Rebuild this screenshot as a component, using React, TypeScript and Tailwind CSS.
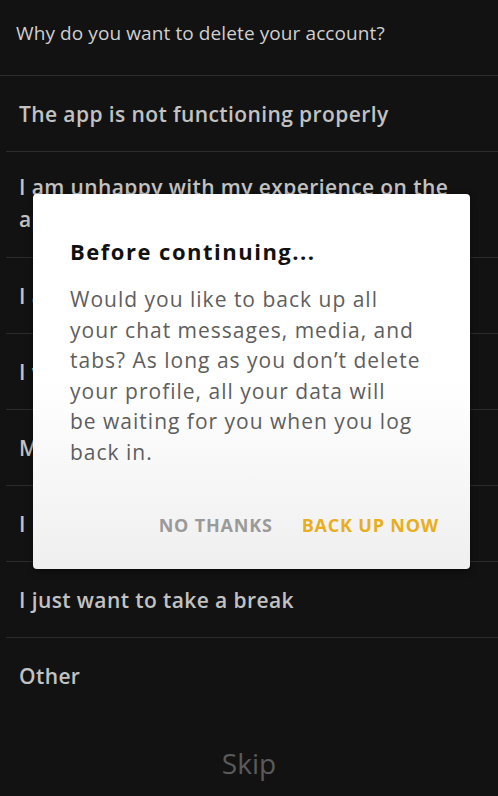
import React from 'react';

// Reasons shown in the delete-account survey list.
const reasons: string[] = [
  'The app is not functioning properly',
  'I am unhappy with my experience on the app',
  'I am not finding who I am looking for',
  'I want to start over with a new profile',
  'My privacy is not protected',
  'I have met someone',
  'I just want to take a break',
  'Other',
];

const font = { fontFamily: '"Open Sans", Roboto, sans-serif' };

const App: React.FC = () => {
  return (
    <div className="relative h-[796px] w-full overflow-hidden bg-[#121212]" style={font}>
      {/* Question header */}
      <div className="flex h-[76px] items-center border-b border-[#2c2c2c] pl-4 pb-2">
        <p className="text-[19px] tracking-[0.1px] text-[#cfcfcf]">Why do you want to delete your account?</p>
      </div>

      {/* Survey rows */}
      <ul className="ml-[6px]">
        {reasons.map((reason, i) => (
          <li
            key={reason}
            className={`flex items-center border-b border-[#2c2c2c] pl-[13px] pr-8 ${
              i === 1 ? 'h-[106px] pb-1' : 'h-[76px]'
            } ${i === reasons.length - 1 ? 'border-b-0' : ''}`}
          >
            <span className="text-[21px] font-semibold leading-[32px] tracking-[0.4px] text-[#c2c2c2]">
              {reason}
            </span>
          </li>
        ))}
      </ul>

      <div className="flex justify-center pt-[28px]">
        <span className="text-[28px] text-[#5a5a5a]">Skip</span>
      </div>

      {/* Backup dialog */}
      <div className="absolute left-[33px] top-[194px] flex h-[375px] w-[437px] flex-col rounded-[4px] bg-gradient-to-b from-white via-white to-[#efefef] px-[37px] pt-[41px] shadow-[0_2px_6px_rgba(0,0,0,0.5)]">
        <h2 className="text-[22px] font-bold tracking-[1.5px] text-[#111]">Before continuing...</h2>
        <p className="mt-[16px] text-[21px] leading-[30.5px] tracking-[1px] text-[#5e5e5e]">
          Would you like to back up all
          <br />
          your chat messages, media, and
          <br />
          tabs? As long as you don’t delete
          <br />
          your profile, all your data will
          <br />
          be waiting for you when you log
          <br />
          back in.
        </p>
        <div className="mt-auto mb-[30px] flex justify-end gap-[29px] -mr-[6px]">
          <button className="text-[18px] font-bold tracking-[0.8px] text-[#9a9a9a]">NO THANKS</button>
          <button className="text-[18px] font-bold tracking-[0.8px] text-[#e8ae1c]">BACK UP NOW</button>
        </div>
      </div>
    </div>
  );
};

export default App;
